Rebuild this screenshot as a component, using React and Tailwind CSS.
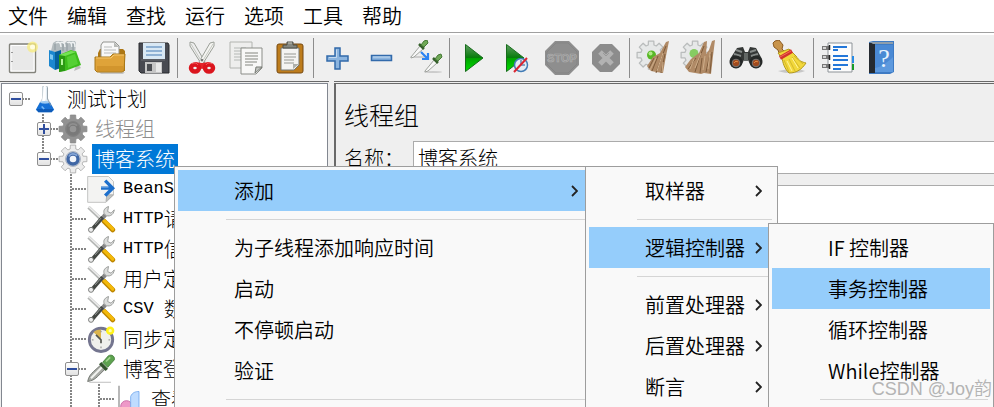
import React from 'react';

/* ---------- toolbar icons ---------- */

const Icon = ({ children, size = 'h-9 w-9' }) => (
  <svg viewBox="0 0 36 36" className={`${size} shrink-0`} fill="none" aria-hidden="true">
    {children}
  </svg>
);

const NewIcon = () => (
  <Icon>
    <rect x="5.5" y="4" width="26" height="28.500" rx="1" fill="#e9e9e9" stroke="#83837c" strokeWidth="1.400" />
    <path d="M7 5.500h23v25.500H7z" stroke="#fff" />
    <path d="M8 12v1M8 21v1" stroke="#999" strokeWidth="2" />
    <circle cx="28.500" cy="7" r="5.500" fill="#f8ec7c" opacity=".75" />
    <circle cx="28.500" cy="7" r="2.500" fill="#fffde0" />
  </Icon>
);

const TemplatesIcon = () => (
  <Icon>
    <path d="m26 31 7-3-4-5z" fill="#888" opacity=".5" />
    <path d="M5 3 8 1h7l1 3 3-3h8l1 2-1 11-12 4L3 11z" fill="#b3bbbe" />
    <path d="M8 3c3-2 5 0 5 4m-1-4c3-2 5 0 5 4M19 3c3-2 5 0 5 4m-1-4c3-2 4 0 4 4" stroke="#eef1f2" strokeWidth="1.500" />
    <path d="M7 4v6m8-6v7m4-8v8m6-7v8" stroke="#8d989d" />
    <path d="m1 10 6 2v18l-6-4z" fill="#1b87cf" />
    <path d="m7 12 6-2v18l-6 2z" fill="#06609a" />
    <path d="m2 14 3 1v5l-3-1z" fill="#7fc9f2" />
    <path d="m11 15 12-5 5 2-9 4v14l-8 2z" fill="#48c61f" />
    <path d="M11 15h6v16l-6 1z" fill="#2a9913" />
    <path d="m17 15 11-4 5 14-16 6z" fill="#3dbd1c" />
    <path d="m19 17 8-3 3 10-10 4z" fill="#5fd83e" opacity=".7" />
    <path d="m11 15 12-4 5 1-11 4z" fill="#74e354" />
    <path d="M13 19h2v6h-2z" fill="#b5f59c" />
  </Icon>
);

const OpenIcon = () => (
  <Icon>
    <path d="M7 32h26l-2 2H9z" fill="#aaa" opacity=".6" />
    <path d="M6 13 8 9h23l2 2v20H6z" fill="#ad7715" />
    <path d="M9 5 11 2h12l4 4v13H9z" fill="#f8f8f8" stroke="#92938f" />
    <path d="m22 2 5 5h-5z" fill="#b8bab7" />
    <path d="M12 7h8m-8 3h12m-12 3h12" stroke="#b8bbbb" />
    <path d="M3 17h15l3-3h12l-1 17-2 1H5l-2-2z" fill="#dfa339" stroke="#a77719" />
    <path d="M4 18h15l3-3h10" stroke="#f5c871" />
    <path d="M5 26h26v5H5z" fill="#c98c26" opacity=".6" />
  </Icon>
);

const SaveIcon = () => (
  <Icon>
    <path d="M3 3h29l1 2v28H5l-2-2z" fill="#484a51" stroke="#292a2e" />
    <path d="M7 3h22v16H7z" fill="#d9e8f4" />
    <path d="M10 7h16m-16 4h16m-16 4h16" stroke="#779fc9" strokeWidth="1.500" />
    <path d="M9 22h17v11H9z" fill="#c6c6c6" />
    <path d="M11 24h5v7h-5z" fill="#4b4d52" />
    <path d="M20 23h5v9h-5z" fill="#e8e8e8" />
    <path d="M5 20h24" stroke="#6b6d73" />
  </Icon>
);

const CutIcon = () => (
  <Icon>
    <path d="m6 2 4 1 11 19-3 3L6 6z" fill="#eee" stroke="#9b9f98" />
    <path d="m30 2-4 1-11 19 3 3L30 6z" fill="#f4f4f1" stroke="#9b9f98" />
    <path d="m7 4 11 18M29 4 18 22" stroke="#c5c8c1" />
    <path d="m11 22 7 1 7-1 2 3-9 4-9-4z" fill="#e5242a" />
    <ellipse cx="11" cy="28" rx="4" ry="3.500" stroke="#db151d" strokeWidth="4.500" />
    <ellipse cx="25" cy="28" rx="4" ry="3.500" stroke="#db151d" strokeWidth="4.500" />
    <path d="M8 24c2-2 5-1 6 1m8 0c1-2 4-3 6-1" stroke="#f56868" />
    <circle cx="18" cy="20" r="1" fill="#555" />
  </Icon>
);

const CopyIcon = () => (
  <Icon>
    <path d="M2 2h22v26H2z" fill="#eeeeed" stroke="#b2b4b0" />
    <path d="M6 8h12M6 11h12M6 14h8m-8 3h8m-8 3h8" stroke="#c8cac7" strokeWidth="1.300" />
    <path d="M13 8h21v20l-6 6H13z" fill="#f8f8f7" stroke="#8b8d88" />
    <path d="M17 13h13m-13 3h13m-13 3h13m-13 3h12m-12 3h8" stroke="#aaaca8" strokeWidth="1.300" />
    <path d="m27 33 1-6h6z" fill="#c4c6c2" stroke="#777b74" />
  </Icon>
);

const PasteIcon = () => (
  <Icon>
    <rect x="5" y="4" width="26" height="29" rx="2" fill="#bd7c1c" stroke="#764910" />
    <path d="M9 8h18v17l-5 5H9z" fill="#f4f4f2" stroke="#777973" />
    <path d="M12 14h12m-12 3h12m-12 3h10m-10 3h10" stroke="#b5b6b2" strokeWidth="1.300" />
    <path d="M21 29v-5h6z" fill="#aeb0aa" />
    <path d="M11 8V5h4V2h6v3h4v3z" fill="#85877f" stroke="#4c4e48" />
    <path d="M16 3h4" stroke="#c5c7be" />
  </Icon>
);

const PlusIcon = () => (
  <Icon>
    <path d="M15 8h5v8h8v5h-8v8h-5v-8H7v-5h8z" fill="#8bb4df" stroke="#326aab" strokeWidth="1.500" />
    <path d="M16.500 9.500v8H9" stroke="#c4daf0" />
  </Icon>
);

const MinusIcon = () => (
  <Icon>
    <path d="M7.500 15.500h20v5h-20z" fill="#8bb4df" stroke="#326aab" strokeWidth="1.500" />
    <path d="M9 17h17" stroke="#c4daf0" />
  </Icon>
);

const Dropper = () => (
  <>
    <path d="M1 17 10 6l3 3L4 17l-3 1z" fill="#f8f8f8" stroke="#a0a39e" />
    <path d="m9 4 5 5" stroke="#35602b" strokeWidth="2.500" />
    <path d="m11 5 3-4 3-1 1 3-4 4z" fill="#70a957" stroke="#467a36" />
  </>
);

const ToggleIcon = () => (
  <Icon>
    <ellipse cx="11" cy="17" rx="9" ry="1" fill="#ccc" />
    <ellipse cx="25" cy="32" rx="9" ry="1" fill="#ccc" />
    <g transform="translate(2 0)"><Dropper /></g>
    <g transform="translate(16 14)"><Dropper /></g>
    <path d="m13 12 6 6m1-5v6h-6" stroke="#2c83f2" strokeWidth="2.200" />
  </Icon>
);

const PlayGradient = ({ id }) => (
  <defs>
    <linearGradient id={id} x1="0" y1="0" x2="0" y2="1">
      <stop offset="0" stopColor="#5f9d61" />
      <stop offset=".48" stopColor="#087c0c" />
      <stop offset=".52" stopColor="#00a400" />
      <stop offset="1" stopColor="#00dd00" />
    </linearGradient>
  </defs>
);

const StartIcon = () => (
  <Icon>
    <PlayGradient id="start" />
    <path d="M9.500 4.500 27 18 9.500 31.500z" fill="url(#start)" stroke="#176d1b" />
  </Icon>
);

const StartNoPausesIcon = () => (
  <Icon>
    <PlayGradient id="start-no-pauses" />
    <path d="M6.500 4.500 24 18 6.500 31.500z" fill="url(#start-no-pauses)" stroke="#176d1b" />
    <circle cx="21" cy="25" r="6.500" fill="#e4edf4" stroke="#417bb5" strokeWidth="1.500" />
    <path d="M21 20v5h4" stroke="#618bb2" strokeWidth="1.500" />
    <path d="m14 32 13-14" stroke="#dc2631" strokeWidth="2" />
  </Icon>
);

const StopIcon = () => (
  <Icon>
    <path d="M11 1h14l10 10v14L25 35H11L1 25V11z" fill="#8e8e8e" />
    <path d="M12 3h12l9 9v12l-9 9H12l-9-9V12z" stroke="#858585" />
    <text x="18" y="22" textAnchor="middle" fontSize="11" fontWeight="bold" fill="#8e8e8e" stroke="#b0b0b0" strokeWidth=".7" fontFamily="Liberation Sans, sans-serif">STOP</text>
  </Icon>
);

const ShutdownIcon = () => (
  <Icon>
    <path d="M12 4h12l8 8v12l-8 8H12l-8-8V12z" fill="#8c8c8c" />
    <path d="m12 12 12 12m0-12L12 24" stroke="#b2b2b2" strokeWidth="5" />
    <path d="m15 13 3 3 3-3" stroke="#999" />
  </Icon>
);

// eight-toothed wheel around 18,18
const GEAR = Array.from({ length: 8 }, (_, tooth) =>
  [[-16, 12.5], [-11, 17], [11, 17], [16, 12.5]].map(([offset, radius]) => {
    const angle = ((tooth * 45 + offset) * Math.PI) / 180;
    return `${(18 + radius * Math.sin(angle)).toFixed(1)} ${(18 - radius * Math.cos(angle)).toFixed(1)}`;
  }).join('L')
).join('L');
const GEAR_PATH = `M${GEAR}z`;

const ClearIcon = () => (
  <Icon>
    <g transform="scale(.84)"><path d={GEAR_PATH} fill="#e6e8e8" stroke="#b9bcbc" strokeWidth="1.500" strokeLinejoin="round" /></g>
    <circle cx="15.500" cy="15" r="4.500" fill="#58b826" />
    <circle cx="14.500" cy="13.500" r="2" fill="#b0ea88" />
    <path d="m30 2 3-1-3 15-3 17-7-1-5-1-4-5 6-9 7-4z" fill="#b08a66" />
    <path d="m30 6-5 13-5 14m9-19-4 19M22 16l-6 15m2-13-5 10" stroke="#7d5b3b" />
    <path d="m27 13-6 18m-1-13-6 12m13-8-1 10" stroke="#cdad89" />
  </Icon>
);

const ClearAllIcon = () => (
  <Icon>
    <g transform="scale(.84)"><path d={GEAR_PATH} fill="#e6e8e8" stroke="#b9bcbc" strokeWidth="1.500" strokeLinejoin="round" /></g>
    <circle cx="14" cy="13.500" r="4.500" fill="#86cc62" />
    <path d="m24 2 3-1-1 13 3-4 3-9 3-1-2 16-2 18-7-1-3 1-12-2-4-5 6-8 8-6z" fill="#b08a66" />
    <path d="m24 6-5 13-4 13m7-14-2 15M16 18 8 29m22-15-4 18m6-20-2 21" stroke="#7d5b3b" />
    <path d="m21 13-6 15m-1-9-4 10m15-13-2 14m7-18-2 17" stroke="#cdad89" />
  </Icon>
);

const SearchIcon = () => (
  <Icon>
    <path d="M2 19 9 8l6-1 2 5h3l2-5 6 1 6 11-2 7h-9l-3-6h-4l-3 6H4z" fill="#343736" />
    <path d="m8 10 6 2m8 0 6-2M6 14l7 2m10 0 7-2" stroke="#858a88" strokeWidth="2" />
    <path d="M16 13h4v8h-4z" fill="#636866" />
    <circle cx="8" cy="22" r="6.500" fill="#252827" />
    <circle cx="28" cy="22" r="6.500" fill="#252827" />
    <circle cx="8" cy="23" r="3.800" fill="#a04a1e" stroke="#777" />
    <circle cx="28" cy="23" r="3.800" fill="#a04a1e" stroke="#777" />
    <path d="M6 23c1-2 3-2 4-1m16 1c1-2 3-2 4-1" stroke="#e58b43" />
  </Icon>
);

const ResetSearchIcon = () => (
  <Icon>
    <path d="M6 31c9 3 20 3 27 0l-10-3z" fill="#aaa" opacity=".6" />
    <path d="M3 1 7 0l4 5-1 4 3 3-5 4-2-6-4-3-1-4z" fill="#c8944b" stroke="#8c5b21" />
    <path d="m6 13 11-4 7 7c3 5 6 6 10 7-4 6-9 10-17 10-5-5-6-10-7-15z" fill="#f2d83c" stroke="#b49a1d" />
    <path d="m12 20 5 12m0-13 6 12m-3-14 8 11m-6-12 9 8" stroke="#d5b92a" />
    <path d="m15 21 5 10m0-13 6 10" stroke="#fff398" />
    <path d="m8 18 12-7" stroke="#d3332c" strokeWidth="4" />
    <path d="m8 17 11-6" stroke="#f06b58" />
  </Icon>
);

const FunctionHelperIcon = () => (
  <Icon>
    <path d="M8 3h24v29H8z" fill="#fcfcfc" stroke="#8d9398" />
    <path d="M32 16h2v7h-2z" fill="#278be7" />
    <path d="M32 24h2v6h-2z" fill="#179b28" />
    <path d="M2 8h7M2 17h7M2 26h7" stroke="#777" strokeWidth="4" />
    <path d="M3 8h3m-3 9h3m-3 9h3" stroke="#d4d4d4" strokeWidth="2" />
    <path d="M9.500 5v5m0 5v5m0 4v5" stroke="#222" strokeWidth="1.500" />
    <path d="M13 7h14m-14 3h5m-5 6h15m-15 4h15m-15 5h15m-15 4h8" stroke="#2377d9" strokeWidth="2" />
  </Icon>
);

const HelpIcon = () => (
  <Icon>
    <path d="M5 2 9 1h21v31l-4 2H5z" fill="#3e7bc4" />
    <path d="M5 3h6v30H5z" fill="#252a31" />
    <path d="M6 2h23v2H9z" fill="#8e9eac" />
    <path d="M11 5h18v27H11z" fill="#4a89d4" />
    <path d="M11 28c6-1 12-5 18-11v15H11z" fill="#6ba3e5" opacity=".6" />
    <text x="20" y="27" textAnchor="middle" fontSize="26" fill="#e8f2fd" fontFamily="Liberation Serif, serif">?</text>
  </Icon>
);

const toolGroups = [
  [['新建', NewIcon], ['模板', TemplatesIcon], ['打开', OpenIcon], ['保存', SaveIcon]],
  [['剪切', CutIcon], ['复制', CopyIcon], ['粘贴', PasteIcon]],
  [['展开', PlusIcon], ['折叠', MinusIcon], ['切换', ToggleIcon]],
  [['启动', StartIcon], ['不停顿启动', StartNoPausesIcon], ['停止', StopIcon], ['关闭', ShutdownIcon]],
  [['清除', ClearIcon], ['清除全部', ClearAllIcon]],
  [['查找', SearchIcon], ['重置查找', ResetSearchIcon]],
  [['函数助手', FunctionHelperIcon], ['帮助', HelpIcon]],
];

/* ---------- tree icons ---------- */

const TREE_ICON = 'h-[30px] w-[30px]';

const FlaskIcon = () => (
  <Icon size={TREE_ICON}>
    <path d="M15 3h6v14l7 14H8l7-14z" fill="#e3edf5" stroke="#c3ccd2" />
    <path d="m17 1 2-1v18l-5 9z" fill="#fff" />
    <path d="m12 22 6 1 6-1 5 9-3 3H10l-3-3z" fill="#1570d6" />
    <path d="m8 30 2 4h16l2-4z" fill="#0a4ca3" opacity=".6" />
    <ellipse cx="18" cy="22" rx="5.500" ry="1.500" fill="#9fcbf2" />
    <path d="m14 27 3 3" stroke="#77b8f5" strokeWidth="2" />
    <path d="M21 4v14l4 8" stroke="#8f9ba5" />
  </Icon>
);

const GearIcon = ({ disabled }) => (
  <Icon size={TREE_ICON}>
    <path d={GEAR_PATH} fill={disabled ? '#929292' : '#ececec'} stroke={disabled ? '#8a8a8a' : '#a9a9a9'} strokeLinejoin="round" />
    <circle cx="18" cy="18" r="9" fill={disabled ? '#848484' : '#c9d0db'} stroke={disabled ? '#7f7f7f' : '#a3acba'} />
    <circle cx="18" cy="18" r="6" fill={disabled ? '#969696' : '#f1f4fa'} stroke={disabled ? '#797979' : '#3f66a5'} strokeWidth="4" />
    <path d="M13 15c2-4 7-4 10-1" stroke={disabled ? '#8f8f8f' : '#86a6d6'} strokeWidth="2" />
  </Icon>
);

const SamplerIcon = () => (
  <Icon size={TREE_ICON}>
    <path d="M2 3h25l6 6v16l-9 9H2z" fill="#f3f3f2" stroke="#b9bab8" />
    <path d="m24 33 1-8h8z" fill="#c4c6c3" stroke="#aaa" />
    <path d="M18 17h15m-10-9 9 9-9 9" stroke="#1d6fcc" strokeWidth="4" />
    <path d="M18 16h9" stroke="#6ca7e5" />
  </Icon>
);

const ConfigIcon = () => (
  <Icon size={TREE_ICON}>
    <path d="m3 4 17 16" stroke="#b3b5b3" strokeWidth="4" />
    <path d="m3 3 16 15" stroke="#ececec" strokeWidth="2" />
    <path d="m22 21 10 10" stroke="#bd8500" strokeWidth="6" strokeLinecap="round" />
    <path d="m22 20 10 10" stroke="#f3b90a" strokeWidth="4" strokeLinecap="round" />
    <path d="m23 13-4 5" stroke="#888" strokeWidth="5" />
    <path d="M27 3c-6 2-7 7-4 10 4 3 10 1 11-6l-4 4-4-2z" fill="#dcdddc" stroke="#8e908e" />
    <path d="M20 16 7 31" stroke="#444844" strokeWidth="4.500" />
    <path d="m18 17-7 8" stroke="#a9aca9" />
    <circle cx="6" cy="31" r="3" fill="#eee" stroke="#686a68" />
  </Icon>
);

const TimerIcon = () => (
  <Icon size={TREE_ICON}>
    <circle cx="18" cy="19" r="14" fill="#f0f0ec" stroke="#74758f" strokeWidth="3.500" />
    <path d="M18 18 9 10c3-3 6-3 9-3z" fill="#dbb44e" />
    <path d="m12 13 6 6v4" stroke="#55564f" strokeWidth="2" />
    <path d="M18 8v2m0 19v-2M7 19h2m18 0h2" stroke="#999" strokeWidth="1.500" />
    <circle cx="29" cy="8" r="5" fill="#fff21c" />
    <circle cx="29" cy="8" r="2" fill="#fffcae" />
  </Icon>
);

const ControllerIcon = () => (
  <Icon size={TREE_ICON}>
    <path d="M4 34h26" stroke="#ccc" strokeWidth="1.500" />
    <path d="M2 33c1-6 4-9 7-12l10-9 5 5-10 10c-4 4-7 5-12 6z" fill="#a7aaa5" stroke="#696d67" />
    <path d="m6 29 13-13" stroke="#f1f2ef" strokeWidth="2.500" />
    <path d="m17 11 8 8" stroke="#31532a" strokeWidth="4" />
    <path d="m20 10 7-8c4-2 8 1 7 5l-8 9z" fill="#5da34f" stroke="#387430" />
    <path d="m24 9 5-5" stroke="#a4d591" strokeWidth="2" />
  </Icon>
);

const ResultIcon = () => (
  <Icon size={TREE_ICON}>
    <path d="M6 2v34" stroke="#aaa" strokeWidth="2" />
    <circle cx="15" cy="27" r="7" fill="#ee99c8" stroke="#c45c9c" />
    <path d="M20 35V15c2-5 6-6 10-6v26z" fill="#bfdcff" stroke="#71a7ed" />
  </Icon>
);

// guides: one cell per level, left of the node icon
const treeRows = [
  { guides: ['minus'], icon: <FlaskIcon />, label: '测试计划' },
  { guides: ['', 'plus-line'], icon: <GearIcon disabled />, label: '线程组', disabled: true },
  { guides: ['', 'minus-last'], icon: <GearIcon />, label: '博客系统', selected: true },
  { guides: ['', '', 'branch'], icon: <SamplerIcon />, latin: 'BeanShell' },
  { guides: ['', '', 'branch'], icon: <ConfigIcon />, latin: 'HTTP', label: '请求' },
  { guides: ['', '', 'branch'], icon: <ConfigIcon />, latin: 'HTTP', label: '信息' },
  { guides: ['', '', 'branch'], icon: <ConfigIcon />, label: '用户定义' },
  { guides: ['', '', 'branch'], icon: <ConfigIcon />, latin: 'CSV ', label: '数据' },
  { guides: ['', '', 'branch'], icon: <TimerIcon />, label: '同步定时' },
  { guides: ['', '', 'minus-line'], icon: <ControllerIcon />, label: '博客登录' },
  { guides: ['', '', 'line', 'branch'], icon: <ResultIcon />, label: '查看' },
];

const VERTICAL = 'w-0.5 bg-[repeating-linear-gradient(to_bottom,#858585_0_2px,transparent_2px_3px)]';

const Guide = ({ type }) => {
  const hasBox = type.startsWith('minus') || type.startsWith('plus');
  const up = type !== '' && type !== 'minus';
  const down = type === 'line' || type === 'branch' || type.endsWith('-line');
  const stub = hasBox || type === 'branch';

  return (
    <span className="grid h-full w-7 shrink-0 grid-cols-2">
      <span className="col-start-1 row-start-1 flex flex-col items-end">
        <span className={`flex-1 ${up ? VERTICAL : ''}`} />
        <span className={`flex-1 ${down ? VERTICAL : ''}`} />
      </span>
      {stub && (
        <span className="col-start-2 row-start-1 h-0.5 self-center bg-[repeating-linear-gradient(to_right,#858585_0_2px,transparent_2px_3px)]" />
      )}
      {hasBox && (
        <button
          aria-label={type.startsWith('plus') ? '展开' : '折叠'}
          className="col-span-2 col-start-1 row-start-1 flex h-3.5 w-3.5 items-center justify-center self-center justify-self-center rounded-xs border border-[#8e8e8e] bg-linear-to-b from-white to-[#e2e2e2]"
        >
          <svg viewBox="0 0 12 12" className="h-3 w-3" stroke="#2f4e9e" strokeWidth="2" aria-hidden="true">
            <path d={type.startsWith('plus') ? 'M1 6h10M6 1v10' : 'M1 6h10'} />
          </svg>
        </button>
      )}
    </span>
  );
};

const TreeRow = ({ row }) => (
  <li className={`flex h-[30px] items-center whitespace-nowrap ${row.disabled ? 'text-[#8c8c8c]' : 'text-black'}`}>
    {row.guides.map((type, idx) => (
      <Guide key={idx} type={type} />
    ))}
    <span className="mr-1 shrink-0">{row.icon}</span>
    <button className={`flex h-full items-center whitespace-pre px-[3px] ${row.selected ? 'bg-[#0078d7] text-white' : ''}`}>
      {row.latin && <span className="font-['Liberation_Mono',monospace] text-[17px]">{row.latin}</span>}
      {row.label}
    </button>
  </li>
);

/* ---------- popup menus ---------- */

const Popup = ({ items, className }) => (
  <div
    role="menu"
    className={`absolute bottom-0 flex flex-col overflow-hidden border border-b-0 border-[#9d9d9d] bg-[#f9f9f9] p-[3px] pb-0 ${className}`}
  >
    {items.map((item, idx) =>
      item === '-' ? (
        <hr key={idx} className="mt-2 mr-0.5 mb-[7px] ml-12 shrink-0 border-t border-[#d5d5d5]" />
      ) : (
        <button
          key={idx}
          role="menuitem"
          className={`flex h-[41px] shrink-0 items-center justify-between pl-14 pr-3 ${item.active ? 'bg-[#95cdfb]' : ''}`}
        >
          {item.label}
          {item.more && (
            <svg viewBox="0 0 7 12" className="h-3 w-[7px]" fill="none" stroke="#222" strokeWidth="1.800" aria-hidden="true">
              <path d="m1 1 5 5-5 5" />
            </svg>
          )}
        </button>
      )
    )}
  </div>
);

const contextMenu = [
  { label: '添加', more: true, active: true },
  '-',
  { label: '为子线程添加响应时间' },
  { label: '启动' },
  { label: '不停顿启动' },
  { label: '验证' },
  '-',
];

const addMenu = [
  { label: '取样器', more: true },
  '-',
  { label: '逻辑控制器', more: true, active: true },
  '-',
  { label: '前置处理器', more: true },
  { label: '后置处理器', more: true },
  { label: '断言', more: true },
];

const controllerMenu = [
  { label: 'IF 控制器' },
  { label: '事务控制器', active: true },
  { label: '循环控制器' },
  { label: 'While控制器' },
  '-',
];

const menus = ['文件', '编辑', '查找', '运行', '选项', '工具', '帮助'];

export default function App() {
  return (
    <div className="relative flex h-screen flex-col overflow-hidden bg-[#efefef] font-['Noto_Sans_CJK_SC',sans-serif] text-xl font-[350] text-black">
      {/* Menu bar */}
      <nav className="flex h-[33px] shrink-0 items-center gap-[19px] border-b border-[#a0a0a0] bg-white pl-2">
        {menus.map((name) => (
          <button key={name}>{name}</button>
        ))}
      </nav>

      {/* Toolbar */}
      <div role="toolbar" className="flex h-12 shrink-0 items-center border-t-2 border-white">
        {toolGroups.map((group, idx) => (
          <React.Fragment key={idx}>
            {idx > 0 && <span className="mx-px h-10 w-0.5 shrink-0 border-l border-[#8c8c8c]" />}
            {group.map(([label, ToolIcon]) => (
              <button key={label} aria-label={label} className="flex w-11 shrink-0 justify-center">
                <ToolIcon />
              </button>
            ))}
          </React.Fragment>
        ))}
      </div>

      <div className="flex min-h-0 flex-1 gap-[5px] font-light">
        {/* Test plan tree */}
        <aside className="flex w-[329px] shrink-0 border-t border-[#696969] pt-px pl-px pr-px">
          <ul className="w-full overflow-hidden border border-b-0 border-[#828790] bg-white">
            {treeRows.map((row, idx) => (
              <TreeRow key={idx} row={row} />
            ))}
          </ul>
        </aside>

        {/* Thread group settings */}
        <main className="flex min-w-0 flex-1 flex-col border-t border-[#696969] pt-px">
          <div className="flex flex-1 flex-col border-l-2 border-t border-[#696969]">
            <h1 className="flex h-[57px] items-center pl-2 pt-1 text-[25px]">线程组</h1>
            <div className="flex h-[33px] items-center pl-2">
              <label htmlFor="group-name" className="w-[69px] shrink-0 whitespace-nowrap">名称：</label>
              <input
                id="group-name"
                defaultValue="博客系统"
                className="h-full min-w-0 flex-1 border border-r-0 border-[#ababab] bg-white px-1 outline-none"
              />
            </div>
            <div className="mt-[11px] flex-1 border-t border-[#ababab] bg-white" />
          </div>
        </main>
      </div>

      <Popup items={contextMenu} className="left-[174px] top-[166px] w-[420px]" />
      <Popup items={addMenu} className="left-[585px] top-[166px] w-[193px]" />
      <Popup items={controllerMenu} className="left-[768px] top-[223px] w-[226px]" />

      {/* Watermark */}
      <span className="absolute bottom-1 right-0.5 font-['Liberation_Sans','Noto_Sans_CJK_SC',sans-serif] text-lg leading-7 text-[#b4b4b4]">
        CSDN @Joy韵
      </span>
    </div>
  );
}
